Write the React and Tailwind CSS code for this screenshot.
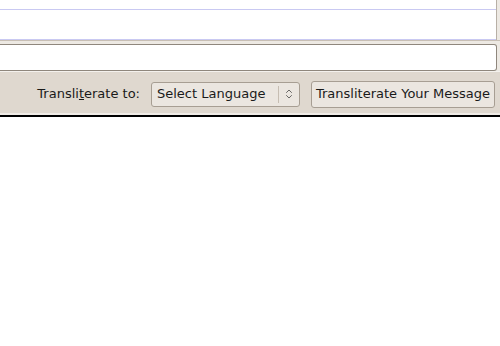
import { ChevronsUpDown } from "lucide-react";

const App = () => {
  return (
    <div className="w-[500px] h-[346px] bg-white overflow-hidden font-['DejaVu_Sans',sans-serif] text-[13px] text-[#1a1a1a]">
      <div className="bg-[#ede9e3] h-[117px] flex flex-col">
        <div className="h-[40px] bg-white border-r border-[#b8b0a6] mr-[3px] flex flex-col">
          <div className="h-[9px]" />
          <div className="h-px bg-[#c9c9f2]" />
          <div className="flex-1" />
          <div className="h-px bg-[#c9c9f2]" />
        </div>
        <div className="h-px bg-[#c8bfb4]" />
        <div className="h-[3px] bg-[#ede9e3]" />
        <div className="h-[27px] bg-white border border-l-0 border-[#8f877d] rounded-r-[3px] mr-[3px]" />
        <div className="flex-1 bg-[#dfd8cf] border-t border-[#f4f1ed] flex items-center justify-end pt-[3px] pr-[5px] gap-[11px]">
          <span className="ml-[1px]">
            Transli<span className="underline">t</span>erate to:
          </span>
          <div className="w-[149px] h-[25px] rounded-[3px] border border-[#a79e93] bg-[#ebe6e0] flex items-center">
            <span className="flex-1 pl-[5px]">Select Language</span>
            <div className="h-[17px] w-px bg-[#c6bdb2]" />
            <div className="w-[20px] flex items-center justify-center text-[#3c3c3c]">
              <ChevronsUpDown size={12} strokeWidth={1.5} />
            </div>
          </div>
          <button className="w-[184px] h-[27px] rounded-[3px] border border-[#a79e93] bg-[#ebe6e0] text-[13px]">
            Transliterate Your Message
          </button>
        </div>
        <div className="h-[2px] bg-[#f0ece7]" />
        <div className="h-[2px] bg-black" />
      </div>
    </div>
  );
};

export default App;
